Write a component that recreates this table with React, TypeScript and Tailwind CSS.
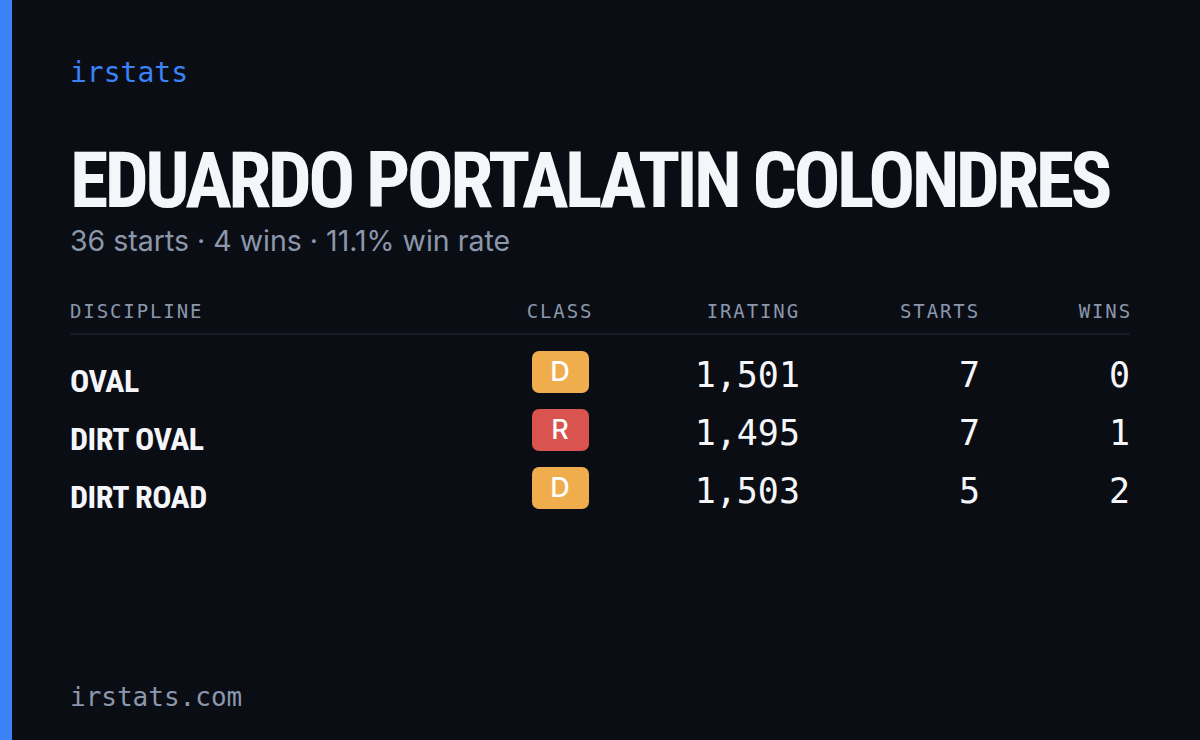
const mono = "font-['DejaVu_Sans_Mono','Liberation_Mono',monospace]"
const narrow = "font-['Roboto_Condensed','Roboto',sans-serif] font-stretch-condensed"

interface Row {
  discipline: string
  license: 'D' | 'R'
  irating: string
  starts: number
  wins: number
}

const rows: Row[] = [
  { discipline: 'Oval', license: 'D', irating: '1,501', starts: 7, wins: 0 },
  { discipline: 'Dirt Oval', license: 'R', irating: '1,495', starts: 7, wins: 1 },
  { discipline: 'Dirt Road', license: 'D', irating: '1,503', starts: 5, wins: 2 },
]

const licenseColor = (license: string) => {
  switch (license) {
    case 'R':
      return 'bg-[#d9534f]'
    case 'D':
      return 'bg-[#f0ad4e]'
    default:
      return 'bg-gray-500'
  }
}

const cols = 'grid grid-cols-[430px_120px_180px_180px_150px]'

export default function App() {
  return (
    <div className="flex h-[740px] w-[1200px] overflow-hidden bg-[#0a0d14]">
      <div className="w-3 shrink-0 bg-[#3b82f6]" />

      <div className="flex min-w-0 flex-1 flex-col pt-[56px] pb-[27px] pl-[58px] pr-[70px]">
        <div className={`${mono} text-[28px] leading-[34px] text-[#3b82f6]`}>irstats</div>

        <h1
          className={`${narrow} mt-[52px] whitespace-nowrap text-[78px] leading-none font-bold tracking-[-3.6px] uppercase text-[#f5f6fa]`}
        >
          Eduardo Portalatin Colondres
        </h1>
        <p className="mt-[4px] font-['Inter',sans-serif] text-[28.5px] leading-[34px] text-[#8b97ab]">
          36 starts · 4 wins · 11.1% win rate
        </p>

        {/* stats table */}
        <div className="mt-[41px]">
          <div
            className={`${cols} ${mono} border-b-2 border-[#161a23] pb-[10px] text-[19px] leading-[24px] tracking-[0.1em] text-[#8b97ab] uppercase`}
          >
            <div>Discipline</div>
            <div className="text-center">Class</div>
            <div className="text-right">iRating</div>
            <div className="text-right">Starts</div>
            <div className="text-right -mr-[2px]">Wins</div>
          </div>

          <div className="pt-2">
            {rows.map((row) => (
              <div key={row.discipline} className={`${cols} h-[58px] items-center`}>
                <div
                  className={`${narrow} whitespace-nowrap pt-[18px] text-[32px] leading-none font-bold tracking-[-0.5px] uppercase text-[#f5f6fa]`}
                >
                  {row.discipline}
                </div>
                <div className="flex justify-center">
                  <span
                    className={`flex h-[42px] w-[57px] items-center justify-center rounded-[7px] font-['Inter',sans-serif] text-[27px] font-medium text-white ${licenseColor(row.license)}`}
                  >
                    {row.license}
                  </span>
                </div>
                <div className={`${mono} pt-[7px] text-right text-[35px] leading-none text-[#f5f6fa]`}>{row.irating}</div>
                <div className={`${mono} pt-[7px] text-right text-[35px] leading-none text-[#f5f6fa]`}>{row.starts}</div>
                <div className={`${mono} pt-[7px] text-right text-[35px] leading-none text-[#f5f6fa]`}>{row.wins}</div>
              </div>
            ))}
          </div>
        </div>

        <div className={`${mono} mt-auto text-[26px] leading-[32px] text-[#8b97ab]`}>irstats.com</div>
      </div>
    </div>
  )
}
